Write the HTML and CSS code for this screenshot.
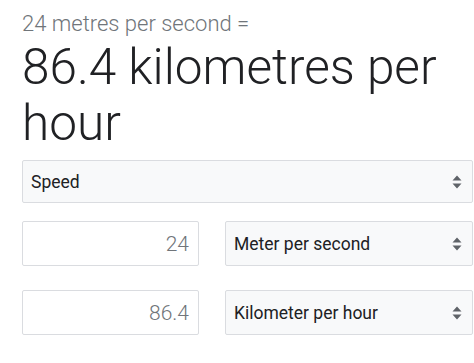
FILE: index.html
```html
<!DOCTYPE html>
<html lang="en">
    <head>
        <meta charset="UTF-8" />
        <meta name="viewport" content="width=device-width, initial-scale=1.0" />
        <title>Speed converter</title>
        <link rel="stylesheet" href="styles.css">
    </head>
    <body>
        <main class="converter">
            <div class="source">24 metres per second =</div>
            <div class="result">86.4 kilometres per hour</div>
            <div class="select select-wide">
                <span>Speed</span>
                <svg class="arrows" width="10" height="14" viewBox="0 0 10 14"><path d="M5 0.5 L9.5 5.5 H0.5 Z M5 13.5 L9.5 8.5 H0.5 Z" fill="#5f6368"/></svg>
            </div>
            <div class="row">
                <div class="value">24</div>
                <div class="select">
                    <span>Meter per second</span>
                    <svg class="arrows" width="10" height="14" viewBox="0 0 10 14"><path d="M5 0.5 L9.5 5.5 H0.5 Z M5 13.5 L9.5 8.5 H0.5 Z" fill="#5f6368"/></svg>
                </div>
            </div>
            <div class="row">
                <div class="value">86.4</div>
                <div class="select">
                    <span>Kilometer per hour</span>
                    <svg class="arrows" width="10" height="14" viewBox="0 0 10 14"><path d="M5 0.5 L9.5 5.5 H0.5 Z M5 13.5 L9.5 8.5 H0.5 Z" fill="#5f6368"/></svg>
                </div>
            </div>
        </main>
    </body>
</html>
```

FILE: styles.css
```css
* {
    margin: 0;
    padding: 0;
    box-sizing: border-box;
}
body {
    font-family: Roboto, "Liberation Sans", sans-serif;
    background: #ffffff;
    color: #202124;
}
.converter {
    padding: 10px 1px 0 22px;
}
.source {
    color: #70757a;
    font-size: 22px;
    font-weight: 300;
    line-height: 28px;
}
.result {
    font-size: 49.5px;
    font-weight: 300;
    line-height: 56px;
    margin: 1px 0 9px;
}
.select {
    display: flex;
    align-items: center;
    justify-content: space-between;
    height: 45px;
    padding: 0 10px 0 8px;
    font-size: 17.5px;
    color: #202124;
    background: #f8f9fa;
    border: 1px solid #dadce0;
    border-radius: 2px;
}
.select-wide {
    height: 43px;
    margin-bottom: 18px;
}
.row {
    display: grid;
    grid-template-columns: 177px 1fr;
    gap: 26px;
    margin-bottom: 24px;
}
.value {
    height: 45px;
    display: flex;
    align-items: center;
    justify-content: flex-end;
    padding-right: 9px;
    font-size: 21px;
    font-weight: 300;
    color: #70757a;
    border: 1px solid #dadce0;
    border-radius: 2px;
}
```
